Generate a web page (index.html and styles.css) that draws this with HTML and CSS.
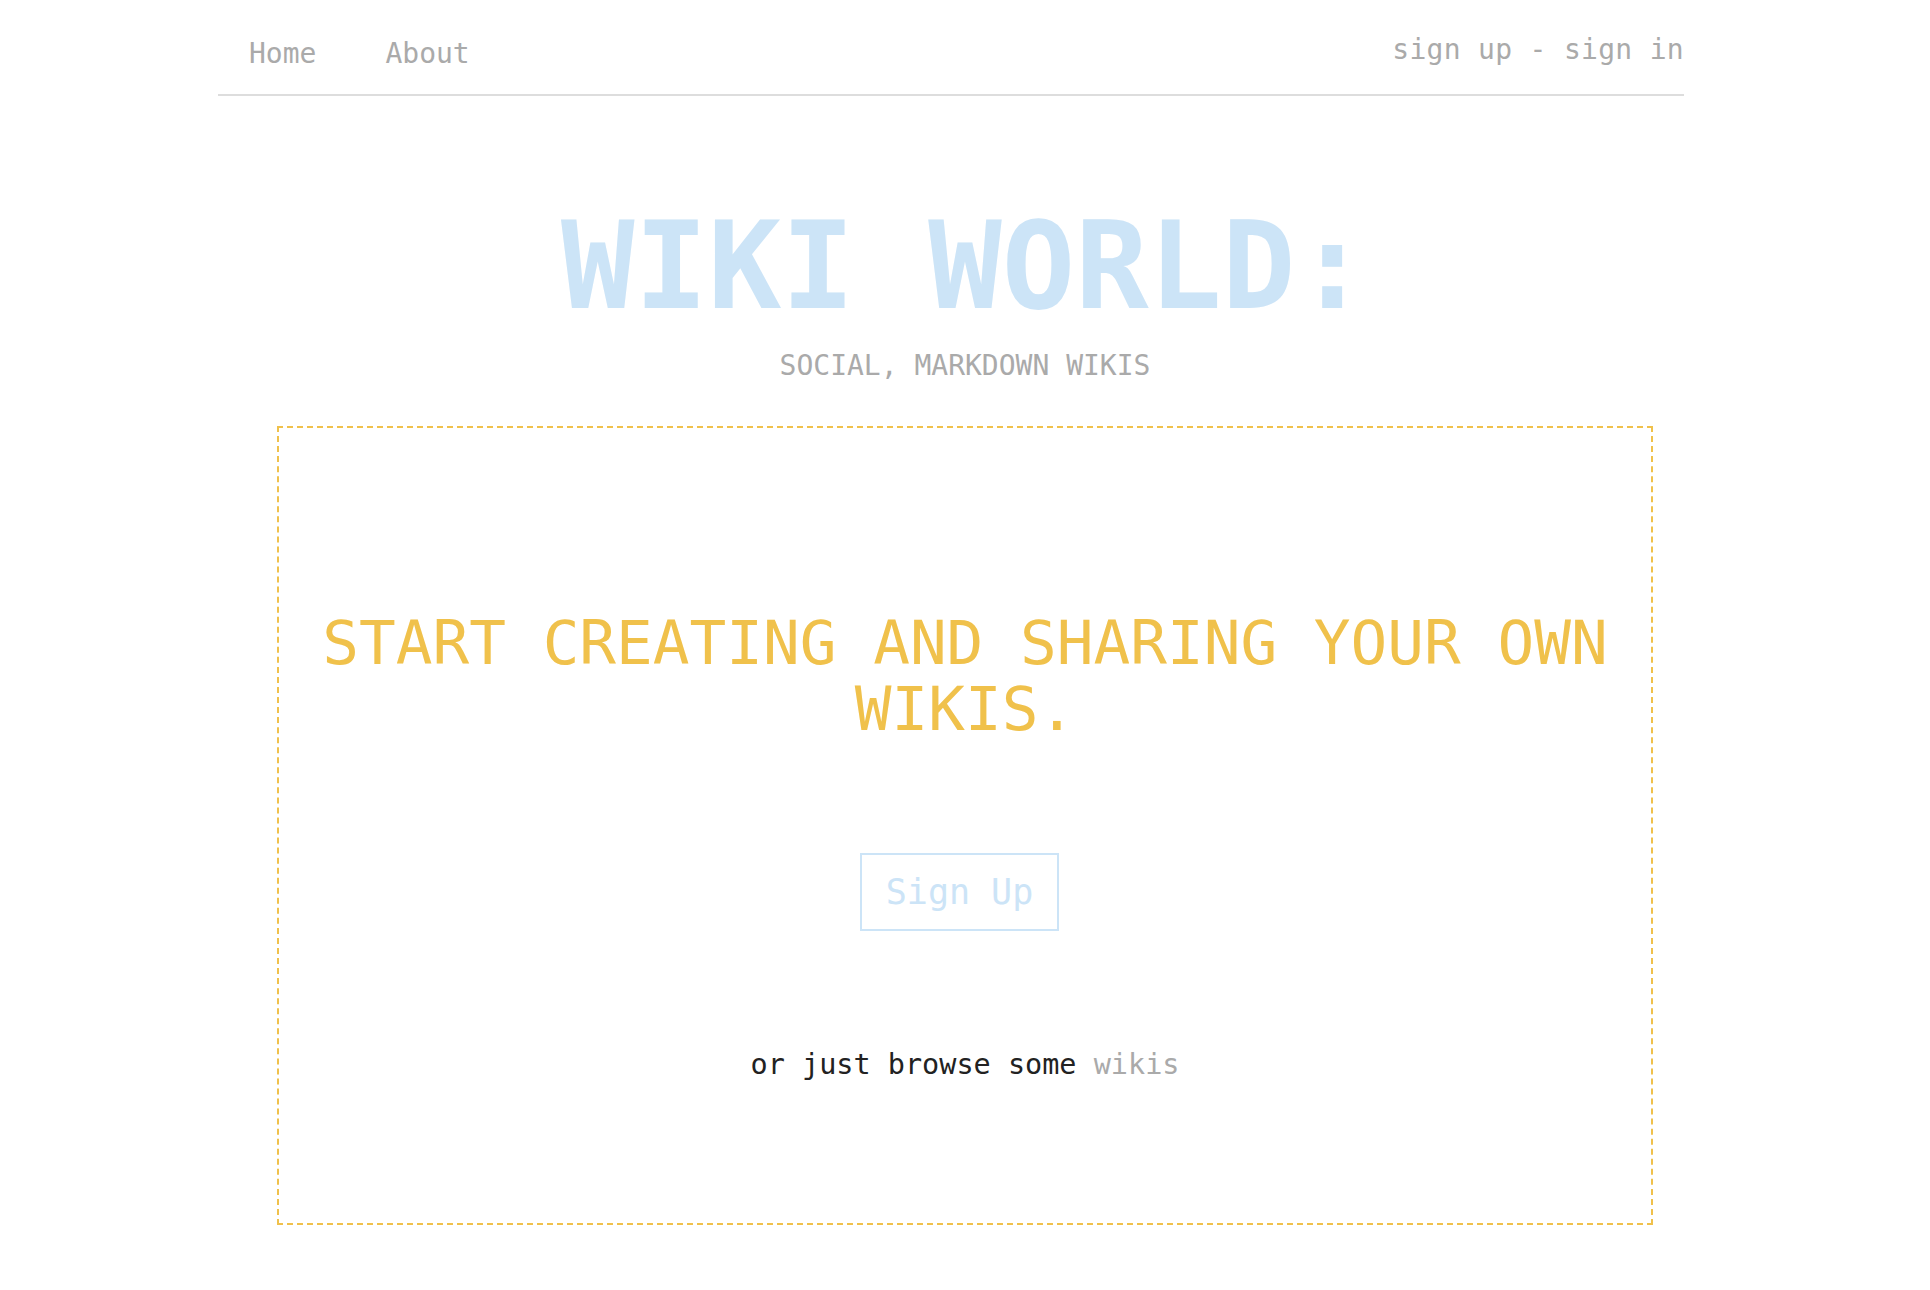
FILE: index.html
```html
<!DOCTYPE html>
<html>
<head>
<meta charset="utf-8">
<title>Wiki World</title>
<link rel="stylesheet" href="styles.css">
</head>
<body>
<header class="topbar">
  <nav class="nav-left">
    <a class="nav-link" href="#">Home</a>
    <a class="nav-link" href="#">About</a>
  </nav>
  <div class="nav-right"><a class="auth-link" href="#">sign up</a> - <a class="auth-link" href="#">sign in</a></div>
</header>
<main class="main">
  <h1 class="title">WIKI WORLD:</h1>
  <p class="tagline">SOCIAL, MARKDOWN WIKIS</p>
  <section class="cta">
    <h2 class="cta-heading">START CREATING AND SHARING YOUR OWN WIKIS.</h2>
    <div class="cta-action"><a class="btn" href="#">Sign Up</a></div>
    <p class="browse">or just browse some <a class="browse-link" href="#">wikis</a></p>
  </section>
</main>
</body>
</html>
```
FILE: styles.css
```css
html, body {
  margin: 0;
  padding: 0;
  background: #ffffff;
}
body {
  font-family: "DejaVu Sans Mono", "Liberation Mono", monospace;
  color: #222222;
}
a {
  text-decoration: none;
  color: inherit;
}
.topbar {
  width: 1466px;
  margin-left: 218px;
  box-sizing: border-box;
  display: flex;
  justify-content: space-between;
  align-items: flex-start;
  padding: 34px 0 24px 0;
  border-bottom: 2px solid #dddddd;
  font-size: 28px;
  line-height: 32px;
  color: #aaaaaa;
}
.nav-left {
  display: flex;
  gap: 69px;
  padding-top: 4px;
  padding-left: 31px;
}
.nav-right {
  white-space: nowrap;
  letter-spacing: 0.3px;
}
.main {
  display: flex;
  flex-direction: column;
  align-items: center;
}
.title {
  margin: 109px 0 0 0;
  font-size: 122px;
  line-height: 122px;
  font-weight: bold;
  color: #cce4f7;
  white-space: nowrap;
}
.tagline {
  margin: 23px 0 0 0;
  font-size: 28px;
  line-height: 32px;
  color: #aaaaaa;
}
.cta {
  box-sizing: border-box;
  width: 1376px;
  margin: 44px 0 65px 0;
  border: 2px dashed #f0c14b;
  padding: 182px 30px 142px 30px;
  text-align: center;
}
.cta-heading {
  margin: 0;
  font-size: 61px;
  line-height: 66px;
  font-weight: normal;
  color: #f0c14b;
}
.cta-action {
  margin-top: 111px;
}
.btn {
  display: inline-block;
  margin-right: 11px;
  border: 2px solid #cce4f7;
  padding: 17px 24px;
  font-size: 35px;
  line-height: 40px;
  color: #cce4f7;
}
.browse {
  margin: 118px 0 0 0;
  font-size: 28.5px;
  line-height: 32px;
  color: #222222;
}
.browse-link {
  color: #aaaaaa;
}
```
